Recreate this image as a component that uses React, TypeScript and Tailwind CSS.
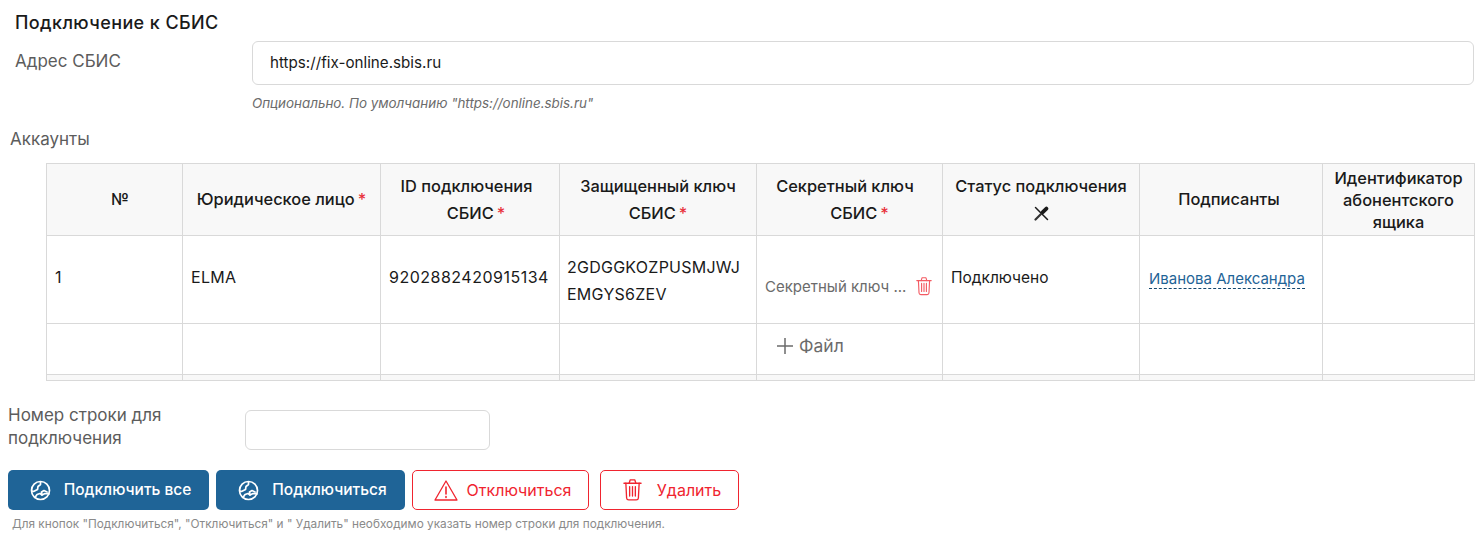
const cols = [136, 198, 179, 197, 186, 197, 183, 152];

function Req() {
  return <span className="ml-[3px] text-[#e8303a]">*</span>;
}

function GlobeIcon() {
  return (
    <svg width="21" height="21" viewBox="0 0 21 21" fill="none" stroke="white" strokeWidth="1.7" strokeLinecap="round" strokeLinejoin="round">
      <circle cx="10.5" cy="10.5" r="9" />
      <path d="M10.5 1.8 L10.5 4.5 L8 6.5 L7.5 9.5 L3.5 11.5 L2 11" />
      <path d="M5 17.5 L7 14.5 L10 13.5 L12 15 L15 13.5 L19 14" />
      <path d="M12 15 L11.5 12 L14 10.5 L17 12" />
    </svg>
  );
}

function TrashIcon({ size }: { size: number }) {
  return (
    <svg width={size} height={size * 1.15} viewBox="0 0 20 23" fill="none" stroke="#f0242f" strokeWidth="1.4" strokeLinecap="round" strokeLinejoin="round">
      <path d="M1 4.5 H19" />
      <path d="M6.5 4.5 L7.5 1 H12.5 L13.5 4.5" />
      <path d="M3 4.5 L3.8 20 Q4 22 6 22 H14 Q16 22 16.2 20 L17 4.5" />
      <path d="M7 8 V18 M10 8 V18 M13 8 V18" />
    </svg>
  );
}

function WarnIcon() {
  return (
    <svg width="24" height="21" viewBox="0 0 24 21" fill="none" stroke="#f0242f" strokeWidth="1.3" strokeLinejoin="round" strokeLinecap="round">
      <path d="M12 1 L23 20 H1 Z" />
      <path d="M12 7 V14 M12 16.5 V17.5" strokeWidth="1.6" />
    </svg>
  );
}

function ToolsIcon() {
  return (
    <svg width="15" height="15" viewBox="0 0 15 15" fill="none" stroke="#1a1a1a" strokeLinecap="round">
      <path d="M1.5 1.5 L13.5 13.5" strokeWidth="1.5" />
      <path d="M1.5 13.5 L7 8" strokeWidth="2.2" stroke="#333333" />
      <path d="M8.8 6.2 L12.4 2.6" strokeWidth="3.8" />
    </svg>
  );
}

export default function App() {
  return (
    <div className="h-[546px] w-[1483px] overflow-hidden bg-white font-['Inter',sans-serif] text-[#1a1a1a]">
      <div className="pl-[15px] pt-[12px] text-[18px] font-medium leading-[21px] tracking-[0.4px]">Подключение к СБИС</div>

      <div className="mt-[8px] flex pl-[15px] pr-[9px]">
        <div className="w-[237px] pt-[9px] text-[17px] leading-[22px] text-[#5c5c5c]">Адрес СБИС</div>
        <div className="flex-1">
          <div className="flex h-[44px] items-center rounded-[6px] border border-[#d9d9d9] pl-[17px] text-[15.2px]">https://fix-online.sbis.ru</div>
          <div className="mt-[10px] text-[13.4px] italic leading-[16px] text-[#6b6b6b]">Опционально. По умолчанию "https://online.sbis.ru"</div>
        </div>
      </div>

      <div className="mt-[17px] pl-[10px] text-[17px] leading-[22px] text-[#5c5c5c]">Аккаунты</div>

      <div className="ml-[46px] mt-[13px] w-[1428px]">
        <table className="w-[1428px] table-fixed border-collapse border border-[#d9d9d9] text-[16px]">
          <colgroup>
            {cols.map((w, i) => (
              <col key={i} style={{ width: w }} />
            ))}
          </colgroup>
          <thead>
            <tr className="h-[72px] bg-[#f8f8f8] text-center text-[16.4px] leading-[27px]">
              <th className="border border-[#d9d9d9] pl-[11px] font-medium">№</th>
              <th className="border border-[#d9d9d9] font-medium">Юридическое лицо<Req /></th>
              <th className="border border-[#d9d9d9] font-medium">
                <div className="pr-[7px]">ID подключения</div>
                <div className="pl-[12px]">СБИС<Req /></div>
              </th>
              <th className="border border-[#d9d9d9] font-medium">Защищенный ключ<br />СБИС<Req /></th>
              <th className="border border-[#d9d9d9] font-medium">
                <div className="pr-[9px]">Секретный ключ</div>
                <div className="pl-[20px]">СБИС<Req /></div>
              </th>
              <th className="border border-[#d9d9d9] font-medium">
                Статус подключения
                <div className="flex h-[26px] items-center justify-center"><ToolsIcon /></div>
              </th>
              <th className="border border-[#d9d9d9] pr-[4px] font-medium">Подписанты</th>
              <th className="border border-[#d9d9d9] pt-[1px] font-medium leading-[22px]">Идентификатор абонентского ящика</th>
            </tr>
          </thead>
          <tbody>
            <tr className="h-[88px] leading-[27px]">
              <td className="border border-[#d9d9d9] pb-[5px] pl-[8px]">1</td>
              <td className="border border-[#d9d9d9] pb-[5px] pl-[8px] tracking-[0.3px]">ELMA</td>
              <td className="border border-[#d9d9d9] pb-[5px] pl-[8px] tracking-[0.5px]">9202882420915134</td>
              <td className="border border-[#d9d9d9] pl-[7px] pt-[3px] tracking-[0.25px]">2GDGGKOZPUSMJWJ<br />EMGYS6ZEV</td>
              <td className="border border-[#d9d9d9] pl-[8px]">
                <div className="flex items-center pt-[14px] text-[15px] text-[#6b6b6b]">
                  <span className="w-[143px] shrink-0 whitespace-nowrap">Секретный ключ ...</span>
                  <span className="ml-[8px] opacity-75"><TrashIcon size={16} /></span>
                </div>
              </td>
              <td className="border border-[#d9d9d9] pb-[5px] pl-[8px] text-[15.5px]">Подключено</td>
              <td className="border border-[#d9d9d9] pb-[2px] pl-[9px]">
                <span className="border-b border-dashed border-[#14486f] text-[15px] leading-[18px] text-[#1f6497]">Иванова Александра</span>
              </td>
              <td className="border border-[#d9d9d9]"></td>
            </tr>
            <tr className="h-[51px]">
              <td className="border border-[#d9d9d9]"></td>
              <td className="border border-[#d9d9d9]"></td>
              <td className="border border-[#d9d9d9]"></td>
              <td className="border border-[#d9d9d9]"></td>
              <td className="border border-[#d9d9d9] pb-[6px] pl-[18px]">
                <div className="flex items-center gap-[4px] text-[17.5px] text-[#6b6b6b]">
                  <svg width="20" height="20" viewBox="0 0 20 20" stroke="#6b6b6b" strokeWidth="1.5"><path d="M10 2 V18 M2 10 H18" /></svg>
                  Файл
                </div>
              </td>
              <td className="border border-[#d9d9d9]"></td>
              <td className="border border-[#d9d9d9]"></td>
              <td className="border border-[#d9d9d9]"></td>
            </tr>
            <tr className="h-[6px] bg-[#f8f8f8]">
              <td className="border-x border-[#d9d9d9]"></td>
              <td className="border-x border-[#d9d9d9]"></td>
              <td className="border-x border-[#d9d9d9]"></td>
              <td className="border-x border-[#d9d9d9]"></td>
              <td className="border-x border-[#d9d9d9]"></td>
              <td className="border-x border-[#d9d9d9]"></td>
              <td className="border-x border-[#d9d9d9]"></td>
              <td className="border-x border-[#d9d9d9]"></td>
            </tr>
          </tbody>
        </table>
      </div>

      <div className="mt-[23px] flex items-start pl-[8px]">
        <div className="w-[237px] text-[17px] leading-[23px] text-[#5c5c5c]">Номер строки для<br />подключения</div>
        <div className="mt-[6px] h-[40px] w-[245px] rounded-[6px] border border-[#d9d9d9]"></div>
      </div>

      <div className="mt-[20px] flex pl-[8px] text-[15.5px]">
        <button className="flex h-[40px] w-[201px] items-center justify-center gap-[13px] rounded-[5px] bg-[#1f6497] pl-[4px] font-medium text-white"><GlobeIcon />Подключить все</button>
        <button className="ml-[7px] flex h-[40px] w-[189px] items-center justify-center gap-[13px] rounded-[5px] bg-[#1f6497] pl-[4px] font-medium text-white"><GlobeIcon />Подключиться</button>
        <button className="ml-[7px] flex h-[40px] w-[177px] items-center justify-center gap-[9px] rounded-[5px] border border-[#f0242f] pl-[4px] text-[16px] text-[#f0242f]"><WarnIcon />Отключиться</button>
        <button className="ml-[11px] flex h-[40px] w-[139px] items-center justify-center gap-[15px] rounded-[5px] border border-[#f0242f] pl-[5px] text-[16px] text-[#f0242f]"><TrashIcon size={19} />Удалить</button>
      </div>

      <div className="mt-[6px] pl-[12px] text-[11.8px] leading-[16px] text-[#8a8a8a]">Для кнопок "Подключиться", "Отключиться" и " Удалить" необходимо указать номер строки для подключения.</div>
    </div>
  );
}
